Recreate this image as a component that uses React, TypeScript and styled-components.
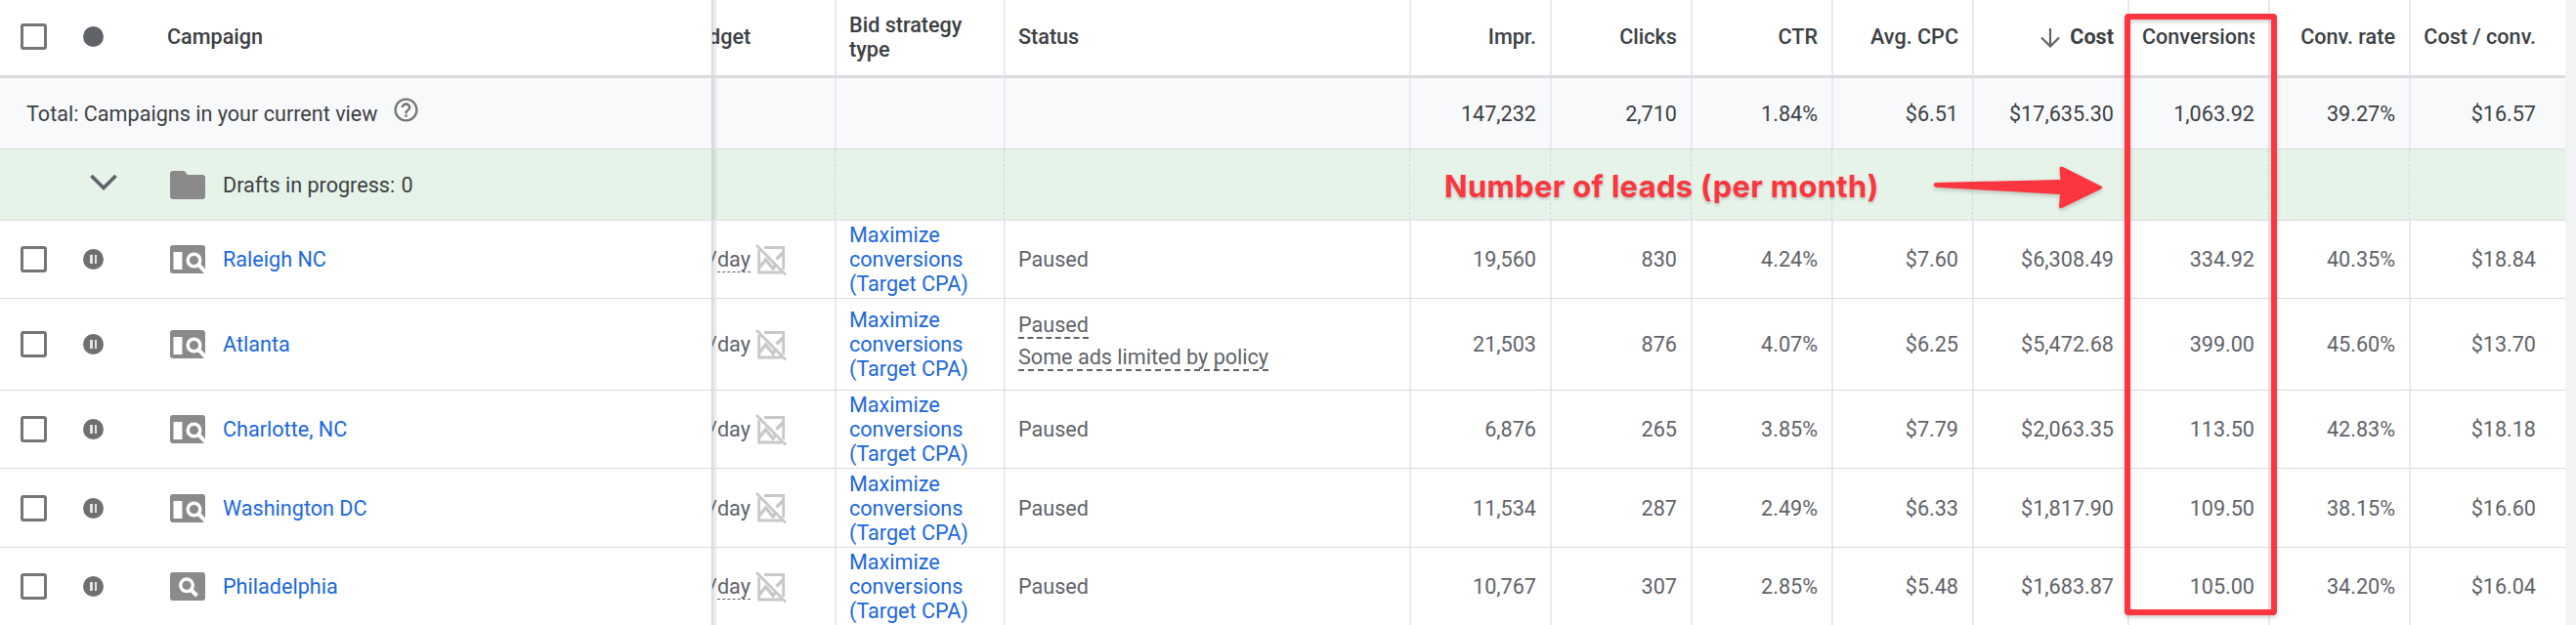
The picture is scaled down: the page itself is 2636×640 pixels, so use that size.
import React from "react";
import styled, {createGlobalStyle, css} from "styled-components";

type CampaignType = {
	name: string
	icon: 'search' | 'display'
	height: number
	budgetLink?: boolean
	limited?: boolean
	values: Array<string>
}

const columns = ['Impr.', 'Clicks', 'CTR', 'Avg. CPC', 'Cost', 'Conversions', 'Conv. rate', 'Cost / conv.']

const totals = ['147,232', '2,710', '1.84%', '$6.51', '$17,635.30', '1,063.92', '39.27%', '$16.57']

const campaigns: Array<CampaignType> = [
	{
		name: 'Raleigh NC', icon: 'display', height: 80, budgetLink: true,
		values: ['19,560', '830', '4.24%', '$7.60', '$6,308.49', '334.92', '40.35%', '$18.84']
	},
	{
		name: 'Atlanta', icon: 'display', height: 94, limited: true,
		values: ['21,503', '876', '4.07%', '$6.25', '$5,472.68', '399.00', '45.60%', '$13.70']
	},
	{
		name: 'Charlotte, NC', icon: 'display', height: 80,
		values: ['6,876', '265', '3.85%', '$7.79', '$2,063.35', '113.50', '42.83%', '$18.18']
	},
	{
		name: 'Washington DC', icon: 'display', height: 81,
		values: ['11,534', '287', '2.49%', '$6.33', '$1,817.90', '109.50', '38.15%', '$16.60']
	},
	{
		name: 'Philadelphia', icon: 'search', height: 80, budgetLink: true,
		values: ['10,767', '307', '2.85%', '$5.48', '$1,683.87', '105.00', '34.20%', '$16.04']
	},
]

const HelpIcon = () => (
	<HelpSvg viewBox="0 0 24 24">
		<path fill="#757575" d="M11 18h2v-2h-2v2zm1-16C6.48 2 2 6.48 2 12s4.48 10 10 10 10-4.48 10-10S17.52 2 12 2zm0 18c-4.41 0-8-3.59-8-8s3.59-8 8-8 8 3.59 8 8-3.59 8-8 8zm0-14c-2.21 0-4 1.79-4 4h2c0-1.1.9-2 2-2s2 .9 2 2c0 2-3 1.75-3 5h2c0-2.25 3-2.5 3-5 0-2.21-1.79-4-4-4z"/>
	</HelpSvg>
)

const FolderIcon = () => (
	<TypeSvg viewBox="0 0 36 29">
		<path fill="#8a8a8a" d="M3 0H14.500L18 4H33a3 3 0 0 1 3 3V26a3 3 0 0 1-3 3H3a3 3 0 0 1-3-3V3a3 3 0 0 1 3-3z"/>
	</TypeSvg>
)

const DisplayIcon = () => (
	<TypeSvg viewBox="0 0 36 29">
		<rect width="36" height="29" rx="3" fill="#8a8a8a"/>
		<rect x="3.500" y="7" width="9" height="18" fill="#fff"/>
		<circle cx="24.500" cy="15.500" r="6.300" fill="none" stroke="#fff" strokeWidth="3.400"/>
		<path d="M28.500 19.500L37 28" stroke="#fff" strokeWidth="4"/>
	</TypeSvg>
)

const SearchIcon = () => (
	<TypeSvg viewBox="0 0 36 29">
		<rect width="36" height="29" rx="3" fill="#8a8a8a"/>
		<circle cx="17" cy="13.300" r="6.300" fill="none" stroke="#fff" strokeWidth="3.400"/>
		<path d="M21 17.500L27.500 24" stroke="#fff" strokeWidth="4"/>
	</TypeSvg>
)

const NoChartIcon = () => (
	<ChartSvg viewBox="0 0 32 32" fill="none" stroke="#c8c8c8" strokeWidth="2.800">
		<path d="M3.700 6V29H27"/>
		<path d="M9 3.500H28.700V26"/>
		<path d="M4 24L10.500 16L18 25L21 21" strokeWidth="3.400"/>
		<path d="M21.500 15.500L29 8" strokeWidth="3.400"/>
		<path d="M1 1L31 31.500"/>
	</ChartSvg>
)

const SortArrow = () => (
	<SortSvg viewBox="0 0 20 20">
		<path d="M10 0V18.500M1 9.500L10 18.500L19 9.500" fill="none" stroke="#5f6368" strokeWidth="2.200"/>
	</SortSvg>
)

const Arrow = () => (
	<ArrowSvg viewBox="0 0 176 56">
		<path d="M5 17C2 17 2 21.700 5 21.700L132 29L131 41Q131 44.500 134 43L174 23.500Q176.500 22 174 20.500L135 1Q131.500 -0.500 131.500 3L132.500 14Z"/>
	</ArrowSvg>
)

export default function App() {

	const campaignRow = campaigns.map((c) => {
		return (
			<Row key={c.name} $height={c.height}>
				<Frozen>
					<Checkbox/>
					<Dot $paused/>
					{c.icon === 'display' ? <DisplayIcon/> : <SearchIcon/>}
					<CampaignLink>{c.name}</CampaignLink>
				</Frozen>
				<BudgetCell>
					<Budget>/<Day $underlined={c.budgetLink}>day</Day></Budget>
					<NoChartIcon/>
				</BudgetCell>
				<Cell><Strategy>Maximize<br/>conversions<br/>(Target CPA)</Strategy></Cell>
				<Cell>
					{c.limited
						? <StatusList><Dashed>Paused</Dashed><Dashed>Some ads limited by policy</Dashed></StatusList>
						: 'Paused'}
				</Cell>
				{c.values.map((v, i) => <NumberCell key={i}>{v}</NumberCell>)}
			</Row>
		)
	})

	return (
		<Page>
			<GlobalStyle/>
			<Table>
				<HeaderRow $height={80}>
					<Frozen>
						<Checkbox/>
						<Dot/>
						<CampaignTitle>Campaign</CampaignTitle>
					</Frozen>
					<BudgetCell><Budget>dget</Budget></BudgetCell>
					<Cell>Bid strategy<br/>type</Cell>
					<Cell>Status</Cell>
					{columns.map((c) => (
						<NumberCell key={c} $sorted={c === 'Cost'}>
							{c === 'Cost' && <SortArrow/>}
							<HeaderLabel $clipped={c === 'Conversions'}>{c}</HeaderLabel>
						</NumberCell>
					))}
				</HeaderRow>
				<TotalRow $height={73}>
					<Frozen>
						<TotalLabel>Total: Campaigns in your current view</TotalLabel>
						<HelpIcon/>
					</Frozen>
					<BudgetCell/>
					<Cell/>
					<Cell/>
					{totals.map((t) => <NumberCell key={t}>{t}</NumberCell>)}
				</TotalRow>
				<DraftsRow $height={73}>
					<Frozen>
						<ChevronSvg viewBox="0 0 28 18">
							<path d="M1.500 2L14 14.500L26.500 2" fill="none" stroke="#5f6368" strokeWidth="3.600"/>
						</ChevronSvg>
						<FolderIcon/>
						<DraftsLabel>Drafts in progress: <DraftsCount>0</DraftsCount></DraftsLabel>
					</Frozen>
					<BudgetCell/>
					<Cell/>
					<Cell/>
					{columns.map((c) => <NumberCell key={c}/>)}
				</DraftsRow>
				{campaignRow}
			</Table>
			<Note>Number of leads (per month)</Note>
			<Arrow/>
			<Highlight/>
		</Page>
	)
}

const GlobalStyle = createGlobalStyle`
  * {
    box-sizing: border-box;
  }

  body {
    margin: 0;
    background: #f1f3f4;
  }
`
const Page = styled.div`
  position: relative;
  width: 2636px;
  height: 640px;
  overflow: hidden;
  background: #f1f3f4;
  font-family: Roboto, sans-serif;
  font-size: 21.6px;
`
const Table = styled.div`
  width: 2625px;
  background: #fff;
`
const Row = styled.div<{ $height: number }>`
  display: grid;
  grid-template-columns: 728px 128px 173px 415px 144px 144px 144px 144px 159px 144px 144px 158px;
  height: ${({$height}) => $height}px;
  border-bottom: 1px solid #dadce0;
  color: #5f6368;
`
const Frozen = styled.div`
  display: flex;
  align-items: center;
  padding-left: 21px;
`
const Cell = styled.div`
  display: flex;
  align-items: center;
  min-width: 0;
  padding-left: 13px;
  line-height: 25px;
  border-right: 2px solid #e8eaed;
`
const BudgetCell = styled(Cell)`
  position: relative;
  overflow: hidden;
  padding-left: 0;
  border-left: 1px solid #cfd2d6;

  &::before {
    content: '';
    position: absolute;
    top: 0;
    bottom: 0;
    left: 0;
    width: 5px;
    background: linear-gradient(90deg, rgba(60, 64, 67, 0.16), rgba(60, 64, 67, 0.04));
  }
`
const NumberCell = styled(Cell)<{ $sorted?: boolean }>`
  justify-content: flex-end;
  padding: 0 14px 0 13px;
  font-weight: ${({$sorted}) => $sorted ? 700 : 'inherit'};

  &:last-child {
    padding-right: 30px;
    border-right: none;
  }
`
const HeaderRow = styled(Row)`
  border-bottom-width: 3px;
  color: #3c4043;
  font-weight: 500;

  ${Frozen}, ${Cell} {
    padding-bottom: 2px;
  }
`
const TotalRow = styled(Row)`
  background: #f8f9fb;
  color: #3c4043;
`
const DraftsRow = styled(Row)`
  background: #e6f3e9;
  color: #3c4043;

  ${Cell} {
    border-right: 1px dashed #d3d8d8;
    margin-right: 1px;
  }

  ${NumberCell}:last-child {
    border-right: none;
  }
`
const Checkbox = styled.span`
  flex: none;
  width: 27px;
  height: 27px;
  margin-right: 37px;
  border: 3px solid #757575;
  border-radius: 3px;
`
const Dot = styled.span<{ $paused?: boolean }>`
  display: flex;
  justify-content: center;
  align-items: center;
  gap: 2px;
  flex: none;
  width: 21px;
  height: 21px;
  margin-right: 68px;
  border-radius: 50%;
  background: #5f6368;

  ${({$paused}) => $paused && css`
    background: #6f6f6f;

    &::before, &::after {
      content: '';
      width: 2.5px;
      height: 9px;
      background: #e4e4e4;
    }
  `}
`
const CampaignTitle = styled.span`
  margin-left: -3px;
`
const CampaignLink = styled.span`
  margin-left: 18px;
  color: #1b68db;
`
const DraftsLabel = styled.span`
  margin-left: 18px;
`
const DraftsCount = styled.span`
  margin-left: 1px;
`
const TotalLabel = styled.span`
  margin-left: 6px;
`
const Budget = styled.span`
  margin-left: -4px;
`
const Day = styled.span<{ $underlined?: boolean }>`
  border-bottom: ${({$underlined}) => $underlined ? '1px dashed #5f6368' : 'none'};
`
const Strategy = styled.span`
  color: #1b68db;
`
const StatusList = styled.div`
  display: flex;
  flex-direction: column;
  align-items: flex-start;
  gap: 6px;
  margin-top: -6px;
`
const Dashed = styled.span`
  line-height: 25px;
  border-bottom: 2px dashed #5f6368;
`
const HeaderLabel = styled.span<{ $clipped?: boolean }>`
  white-space: nowrap;

  ${({$clipped}) => $clipped && css`
    width: 115px;
    overflow: hidden;
  `}
`
const HelpSvg = styled.svg`
  width: 29px;
  height: 29px;
  margin: -7px 0 0 14px;
`
const TypeSvg = styled.svg`
  flex: none;
  width: 36px;
  height: 29px;
`
const ChevronSvg = styled.svg`
  width: 28px;
  height: 18px;
  margin: -4px 54px 0 71px;
`
const ChartSvg = styled.svg`
  flex: none;
  width: 32px;
  height: 32px;
  margin-left: 5px;
`
const SortSvg = styled.svg`
  flex: none;
  width: 20px;
  height: 20px;
  margin: 3px 10px 0 0;
`
const Note = styled.div`
  position: absolute;
  top: 171px;
  left: 1478px;
  color: #fb3640;
  font-family: Inter, sans-serif;
  font-size: 31px;
  font-weight: 700;
  line-height: 40px;
  letter-spacing: 0.3px;
  white-space: nowrap;
  text-shadow: 0 2px 3px rgba(0, 0, 0, 0.2);
`
const ArrowSvg = styled.svg`
  position: absolute;
  top: 170px;
  left: 1976px;
  width: 176px;
  height: 56px;
  overflow: visible;
  fill: #fb3640;
  filter: drop-shadow(0 2px 2px rgba(0, 0, 0, 0.2));
`
const Highlight = styled.div`
  position: absolute;
  top: 14px;
  left: 2174px;
  width: 156px;
  height: 616px;
  border: 6px solid #fb3640;
  border-radius: 4px;
  filter: drop-shadow(0 2px 2px rgba(0, 0, 0, 0.2));
`
